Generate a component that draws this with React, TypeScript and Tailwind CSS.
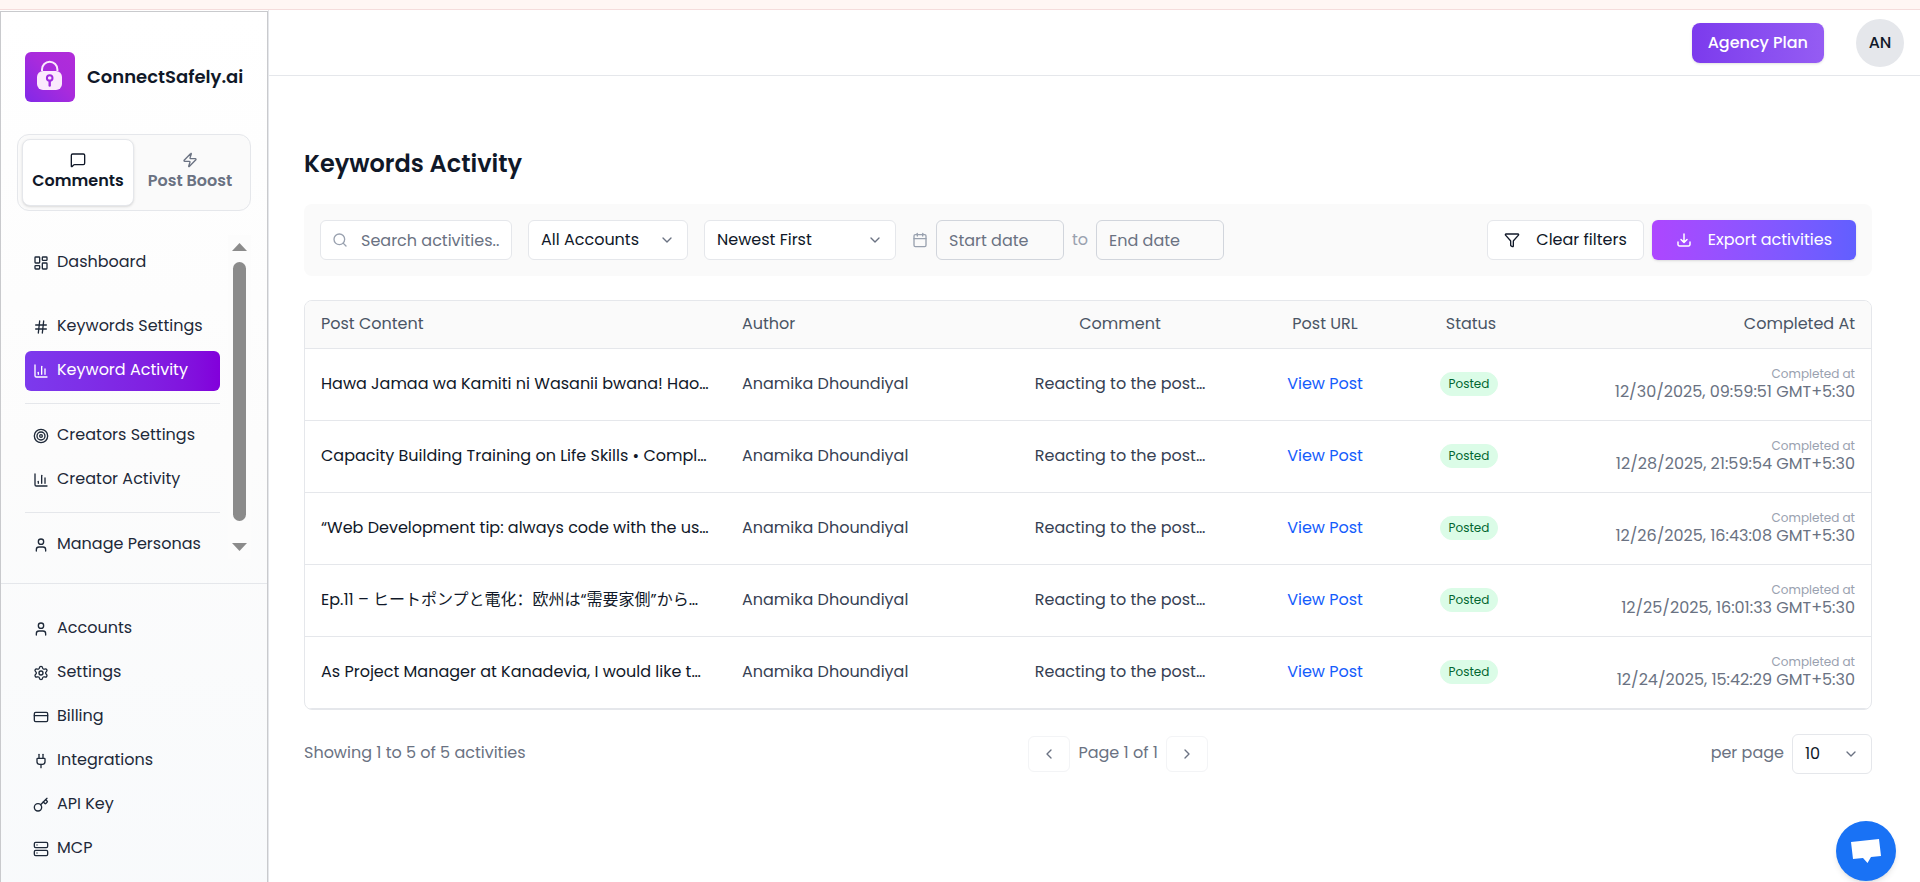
import React from 'react';
import {
  Calendar,
  ChartColumn,
  ChevronDown,
  ChevronLeft,
  ChevronRight,
  CreditCard,
  Funnel,
  Hash,
  Key,
  LayoutDashboard,
  MessageSquare,
  Plug,
  Search,
  Server,
  Settings,
  Target,
  User,
  Zap,
  type LucideIcon,
} from 'lucide-react';

interface NavItem {
  label: string;
  icon: LucideIcon;
  active?: boolean;
}

interface Activity {
  id: number;
  content: string;
  author: string;
  comment: string;
  status: string;
  completedAt: string;
}

const keywordItems: NavItem[] = [
  { label: 'Keywords Settings', icon: Hash },
  { label: 'Keyword Activity', icon: ChartColumn, active: true },
];

const creatorItems: NavItem[] = [
  { label: 'Creators Settings', icon: Target },
  { label: 'Creator Activity', icon: ChartColumn },
];

const footerItems: NavItem[] = [
  { label: 'Accounts', icon: User },
  { label: 'Settings', icon: Settings },
  { label: 'Billing', icon: CreditCard },
  { label: 'Integrations', icon: Plug },
  { label: 'API Key', icon: Key },
  { label: 'MCP', icon: Server },
];

const activities: Activity[] = [
  {
    id: 1,
    content: 'Hawa Jamaa wa Kamiti ni Wasanii bwana! Hao…',
    author: 'Anamika Dhoundiyal',
    comment: 'Reacting to the post…',
    status: 'Posted',
    completedAt: '12/30/2025, 09:59:51 GMT+5:30',
  },
  {
    id: 2,
    content: 'Capacity Building Training on Life Skills • Compl…',
    author: 'Anamika Dhoundiyal',
    comment: 'Reacting to the post…',
    status: 'Posted',
    completedAt: '12/28/2025, 21:59:54 GMT+5:30',
  },
  {
    id: 3,
    content: '“Web Development tip: always code with the us…',
    author: 'Anamika Dhoundiyal',
    comment: 'Reacting to the post…',
    status: 'Posted',
    completedAt: '12/26/2025, 16:43:08 GMT+5:30',
  },
  {
    id: 4,
    content: 'Ep.11 – ヒートポンプと電化：欧州は“需要家側”から…',
    author: 'Anamika Dhoundiyal',
    comment: 'Reacting to the post…',
    status: 'Posted',
    completedAt: '12/25/2025, 16:01:33 GMT+5:30',
  },
  {
    id: 5,
    content: 'As Project Manager at Kanadevia, I would like t…',
    author: 'Anamika Dhoundiyal',
    comment: 'Reacting to the post…',
    status: 'Posted',
    completedAt: '12/24/2025, 15:42:29 GMT+5:30',
  },
];

const NavLink: React.FC<{ item: NavItem }> = ({ item }) => {
  const Icon = item.icon;
  return (
    <a
      href="#"
      className={`flex h-10 items-center gap-2 rounded-md px-2 ${
        item.active ? 'bg-linear-to-r from-[#7c3aed] to-[#8200db] text-white' : 'text-gray-800'
      }`}
    >
      <Icon size={16} strokeWidth={2} className="shrink-0" />
      <span className="pb-0.5 whitespace-nowrap">{item.label}</span>
    </a>
  );
};

const Logo: React.FC = () => (
  <svg width="50" height="50" viewBox="0 0 50 50" className="shrink-0" aria-hidden="true">
    <defs>
      <linearGradient id="logo" x1="0" y1="1" x2="1" y2="0">
        <stop offset="0" stopColor="#8129e8" />
        <stop offset="0.55" stopColor="#a92bdc" />
        <stop offset="1" stopColor="#b12cd9" />
      </linearGradient>
    </defs>
    <rect width="50" height="50" rx="6" fill="url(#logo)" />
    <path d="M17 19v-1.500a7.700 7.700 0 0 1 15.400 0V19" fill="none" stroke="#fbe9fd" strokeWidth="2" />
    <rect x="12" y="19" width="25" height="19" rx="6" fill="#fbe9fd" />
    <circle cx="24.700" cy="26" r="2.800" fill="none" stroke="#a02bdf" strokeWidth="2" />
    <path d="M24.700 29v4.500" stroke="#a02bdf" strokeWidth="2.400" strokeLinecap="round" />
  </svg>
);

const Sidebar: React.FC = () => (
  <aside className="mt-px flex w-[268px] shrink-0 flex-col border border-b-0 border-[#c9cacd] bg-linear-to-b from-white via-[#fcfcfc] to-slate-50">
    <div className="flex items-center gap-3 px-6 pt-10">
      <Logo />
      <span className="text-lg font-semibold text-gray-900">ConnectSafely.ai</span>
    </div>

    <div className="mx-4 mt-8 grid grid-cols-2 rounded-xl border border-gray-200 bg-[#fafafa] p-1">
      <button className="flex h-[67px] flex-col items-center rounded-lg border border-gray-200 bg-white pt-3 font-semibold text-gray-900 shadow-sm">
        <MessageSquare size={16} />
        <span className="leading-[26px]">Comments</span>
      </button>
      <button className="flex h-[67px] flex-col items-center rounded-lg border border-transparent pt-3 font-semibold text-gray-500">
        <Zap size={16} />
        <span className="leading-[26px]">Post Boost</span>
      </button>
    </div>

    <div className="mx-4 mt-6 flex h-[324px] overflow-hidden">
      <nav className="min-w-0 flex-1 p-2">
        <NavLink item={{ label: 'Dashboard', icon: LayoutDashboard }} />
        <div className="mt-6 space-y-1">
          {keywordItems.map((item) => (
            <NavLink key={item.label} item={item} />
          ))}
        </div>
        <hr className="my-3 border-gray-200" />
        <div className="space-y-1">
          {creatorItems.map((item) => (
            <NavLink key={item.label} item={item} />
          ))}
        </div>
        <hr className="my-3 border-gray-200" />
        <NavLink item={{ label: 'Manage Personas', icon: User }} />
      </nav>
      <div className="flex w-[23px] flex-col items-center bg-[#fcfcfc] py-2" aria-hidden="true">
        <svg width="15" height="8" viewBox="0 0 15 8" className="shrink-0">
          <path d="M7.500 0L15 8H0z" fill="#8b8b8b" />
        </svg>
        <div className="mt-[11px] mb-[22px] w-[13px] flex-1 rounded-full bg-[#8b8b8b]" />
        <svg width="15" height="8" viewBox="0 0 15 8" className="shrink-0">
          <path d="M0 0h15L7.500 8z" fill="#8b8b8b" />
        </svg>
      </div>
    </div>

    <nav className="mt-6 space-y-1 border-t border-gray-200 px-6 pt-[25px]">
      {footerItems.map((item) => (
        <NavLink key={item.label} item={item} />
      ))}
    </nav>
  </aside>
);

interface SelectProps {
  label: string;
  options: string[];
  className: string;
}

const Select: React.FC<SelectProps> = ({ label, options, className }) => (
  <div className={`relative ${className}`}>
    <select
      aria-label={label}
      className="h-10 w-full appearance-none rounded-md border border-gray-200 bg-white pr-8 pl-3 text-gray-900"
    >
      {options.map((option) => (
        <option key={option}>{option}</option>
      ))}
    </select>
    <ChevronDown size={16} className="pointer-events-none absolute top-3 right-[13px] text-gray-500" />
  </div>
);

const Filters: React.FC = () => (
  <div className="mt-6 flex items-center gap-4 rounded-lg bg-[#fafafa] p-4">
    <div className="relative w-48">
      <Search size={16} className="absolute top-3 left-3 text-gray-400" />
      <input
        type="text"
        aria-label="Search activities"
        placeholder="Search activities.."
        className="h-10 w-full rounded-md border border-gray-200 bg-white pl-10 text-gray-900 placeholder:text-gray-500"
      />
    </div>
    <Select label="Account" options={['All Accounts']} className="w-40" />
    <Select label="Sort order" options={['Newest First', 'Oldest First']} className="w-48" />
    <div className="flex items-center gap-2">
      <Calendar size={16} className="text-gray-400" />
      <input
        type="text"
        aria-label="Start date"
        placeholder="Start date"
        className="h-10 w-32 rounded-md border border-gray-300 px-3 placeholder:text-gray-500"
      />
      <span className="text-gray-400">to</span>
      <input
        type="text"
        aria-label="End date"
        placeholder="End date"
        className="h-10 w-32 rounded-md border border-gray-300 px-3 placeholder:text-gray-500"
      />
    </div>
    <div className="ml-auto flex items-center gap-2">
      <button className="flex h-10 items-center gap-4 rounded-md border border-gray-200 bg-white px-4 text-gray-900">
        <Funnel size={16} />
        Clear filters
      </button>
      <button className="flex h-10 items-center gap-4 rounded-md bg-linear-to-r from-[#ad46ff] to-[#615fff] px-6 text-white shadow-sm">
        <svg
          width="16"
          height="16"
          viewBox="0 0 16 16"
          fill="none"
          stroke="currentColor"
          strokeWidth="1.500"
          strokeLinecap="round"
          strokeLinejoin="round"
        >
          <path d="M8 2v8M5 7.500l3 3 3-3M2 10v2.500A1.500 1.500 0 0 0 3.500 14h9a1.500 1.500 0 0 0 1.500-1.500V10" />
        </svg>
        Export activities
      </button>
    </div>
  </div>
);

const ActivityTable: React.FC = () => (
  <div className="mt-6 overflow-hidden rounded-lg border border-gray-200">
    <table className="w-full table-fixed border-separate border-spacing-0 whitespace-nowrap">
      <thead>
        <tr className="h-12 bg-[#fafafa] text-gray-600 *:border-b *:border-gray-200 *:px-4 *:pb-0.5 *:font-normal">
          <th className="w-[421px] text-left">Post Content</th>
          <th className="w-[269px] text-left">Author</th>
          <th className="w-[250px] text-center">Comment</th>
          <th className="w-[160px] text-center">Post URL</th>
          <th className="w-[132px] text-center">Status</th>
          <th className="w-[334px] text-right">Completed At</th>
        </tr>
      </thead>
      <tbody>
        {activities.map((activity) => (
          <tr key={activity.id} className="h-[72px] *:border-b *:border-gray-200 *:px-4 *:pb-0.5">
            <td className="text-gray-900">{activity.content}</td>
            <td className="text-gray-700">{activity.author}</td>
            <td className="text-center text-gray-700">{activity.comment}</td>
            <td className="text-center">
              <a href="#" className="text-blue-600">
                View Post
              </a>
            </td>
            <td className="text-center">
              <span className="mr-1 inline-block rounded-full border border-green-100 bg-green-100 px-2 text-xs leading-[22px] text-green-800">
                {activity.status}
              </span>
            </td>
            <td className="text-right">
              <div className="text-xs leading-4 text-gray-400">Completed at</div>
              <div className="leading-5 text-gray-500">{activity.completedAt}</div>
            </td>
          </tr>
        ))}
      </tbody>
    </table>
  </div>
);

const Pagination: React.FC = () => (
  <div className="mt-6 flex items-center justify-between text-gray-500">
    <span className="pb-0.5">Showing 1 to 5 of 5 activities</span>
    <div className="flex items-center gap-2">
      <button
        aria-label="Previous page"
        className="flex h-9 w-[42px] items-center justify-center rounded-md border border-gray-100"
      >
        <ChevronLeft size={16} />
      </button>
      <span className="pb-0.5">Page 1 of 1</span>
      <button
        aria-label="Next page"
        className="flex h-9 w-[42px] items-center justify-center rounded-md border border-gray-100"
      >
        <ChevronRight size={16} />
      </button>
    </div>
    <div className="flex items-center gap-2">
      <span className="pb-0.5">per page</span>
      <Select label="Rows per page" options={['10', '25', '50']} className="w-20" />
    </div>
  </div>
);

export default function App() {
  return (
    <div className="flex min-h-screen flex-col bg-white font-[Poppins,Inter,'Noto_Sans_CJK_SC',sans-serif] text-base">
      <div className="h-2.5 border-b border-[#f5dcdc] bg-[#fff6f4]" />
      <div className="flex flex-1">
        <Sidebar />
        <div className="min-w-0 flex-1 border-l border-gray-200">
          <header className="flex h-[66px] items-center justify-end gap-8 border-b border-gray-200 pr-4">
            <button className="h-10 rounded-lg bg-linear-to-r from-[#7c3aed] to-[#955cf3] px-4 font-medium text-white shadow-sm">
              Agency Plan
            </button>
            <button
              aria-label="Account menu"
              className="flex size-12 items-center justify-center rounded-full bg-gray-200 font-medium text-gray-900"
            >
              AN
            </button>
          </header>
          <main className="pt-[72px] pr-12 pb-8 pl-[35px]">
            <h1 className="text-2xl font-semibold text-gray-900">Keywords Activity</h1>
            <Filters />
            <ActivityTable />
            <Pagination />
          </main>
        </div>
      </div>
      <button
        aria-label="Open chat"
        className="fixed right-6 bottom-px flex size-[60px] items-center justify-center rounded-full bg-[#1972f5] shadow-md"
      >
        <svg width="30" height="26" viewBox="0 0 30 26" fill="#fff">
          <path d="M0 4L28 1L30 18L20 19L16.500 25L12 20L2 21z" />
        </svg>
      </button>
    </div>
  );
}
